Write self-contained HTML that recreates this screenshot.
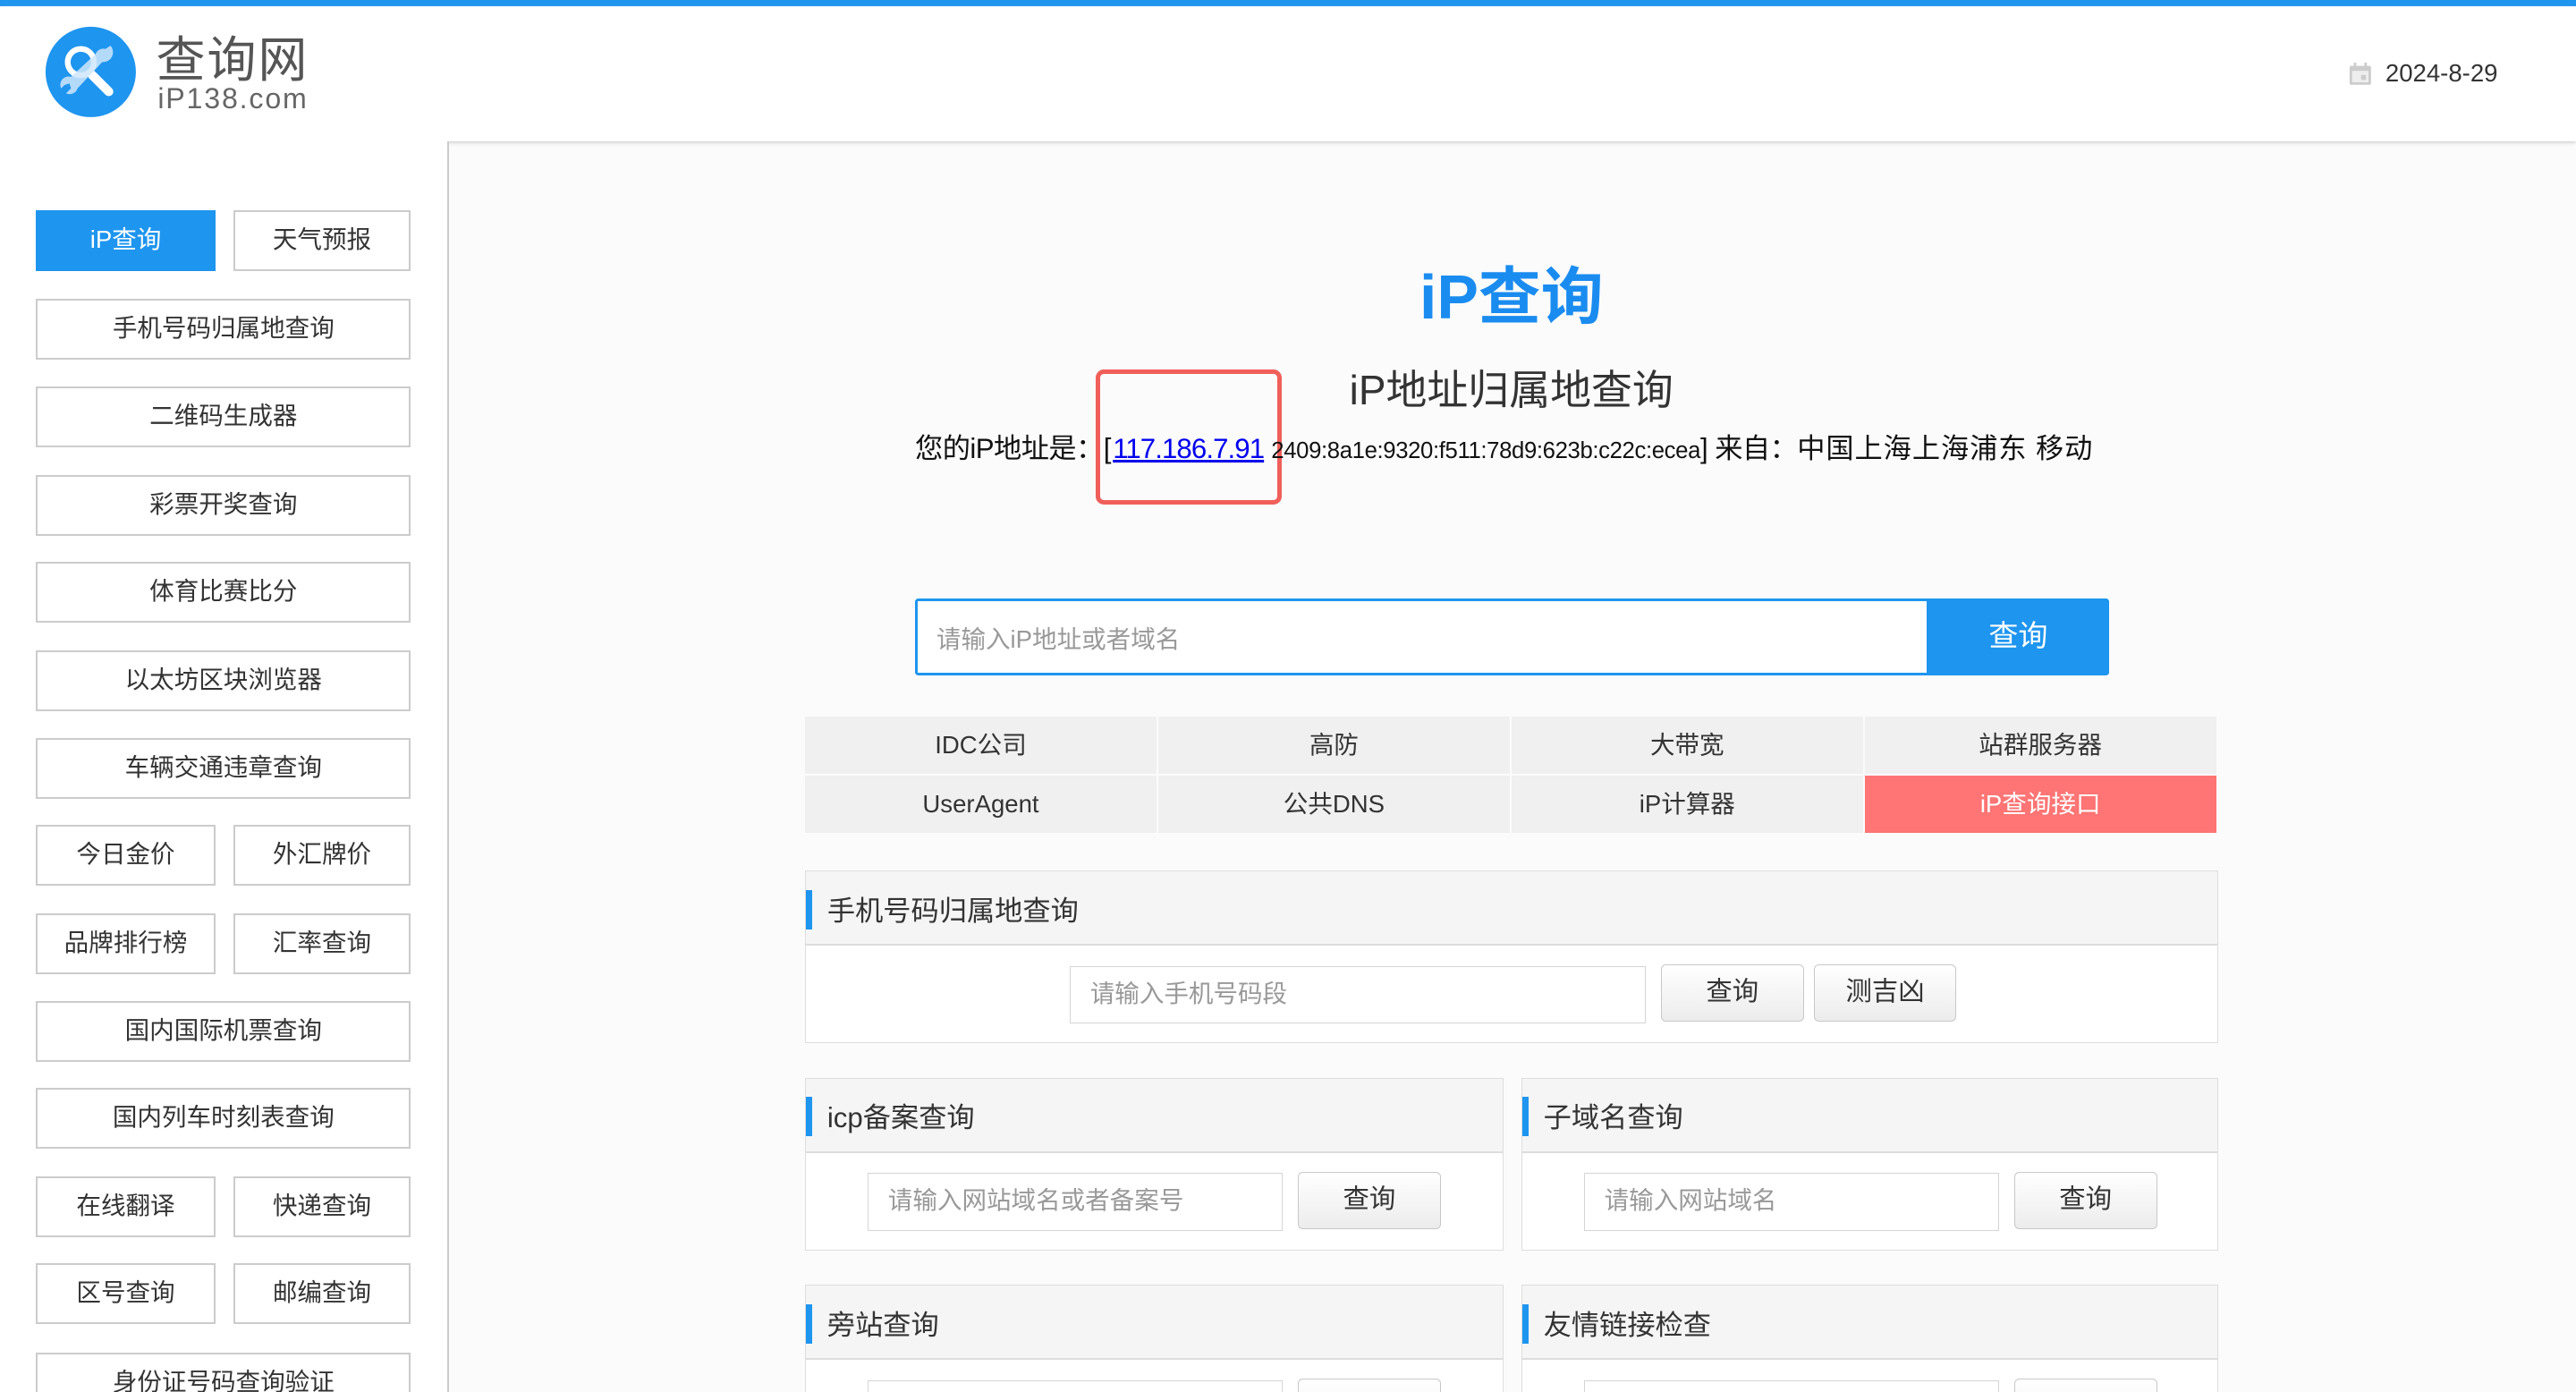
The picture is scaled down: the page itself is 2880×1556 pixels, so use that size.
<!DOCTYPE html>
<html><head><meta charset="utf-8">
<style>
html,body{margin:0;padding:0;width:2880px;height:1556px;overflow:hidden;background:#fbfbfb}
#w{position:absolute;left:0;top:0;width:1568px;height:847px;overflow:hidden;zoom:1.8367;font-family:"Liberation Sans","Noto Sans CJK SC",sans-serif;color:#333}
.a{position:absolute}
.topbar{left:0;top:0;width:1568px;height:4px;background:#1e95ef}
.hdr{left:0;top:4px;width:1568px;height:82px;background:#fff;box-shadow:0 1px 2px #ccc}
.side{left:0;top:86px;width:272px;height:761px;background:#fff;border-right:1.5px solid #ccc}
.b{position:absolute;box-sizing:border-box;height:37px;border:1.5px solid #ccc;background:#fff;text-align:center;line-height:34px;font-size:15px;color:#333}
.f{left:22px;width:228px}.l{left:22px;width:109px}.r{left:142px;width:108px}
.tab{position:absolute;width:214px;height:35px;background:#f0f0f0;text-align:center;line-height:35px;font-size:15px;color:#333}
.pn{position:absolute;box-sizing:border-box;border:1px solid #ddd;background:#fff}
.ph{height:44px;background:#f5f5f5;border-bottom:1.5px solid #ddd;position:relative}
.ph i{position:absolute;left:0;top:11px;width:4px;height:24px;background:#1e95ef}
.ph span{position:absolute;left:13px;top:10px;font-size:17px;color:#333}
.in{position:absolute;box-sizing:border-box;height:35px;border:1px solid #d5d5d5;background:#fff;font-size:15px;color:#999;line-height:33px;padding-left:12px}
.bt{position:absolute;box-sizing:border-box;height:35px;width:87px;border:1px solid #c8c8c8;border-radius:3px;background:linear-gradient(#fff,#ececec);text-align:center;line-height:33px;font-size:16px;color:#333}
</style></head><body><div id="w">
<div class="a topbar"></div>
<div class="a hdr"></div>
<svg class="a" style="left:27px;top:16px" width="56" height="56" viewBox="0 0 56 56">
<circle cx="28" cy="28" r="27.5" fill="#1e95ef"/>
<path d="M29 30 L39 40" stroke="#fff" stroke-width="5.5" stroke-linecap="round"/>
<circle cx="22" cy="22" r="8" fill="none" stroke="#fff" stroke-width="3.5"/>
<path d="M37 14 l3-2 a6 6 0 0 1 -5 10 L20 38 a5 5 0 0 1 -7 3 l3-3 -1-3 -3 1 -2 2 a5 5 0 0 1 6-7 L31 17 a5 5 0 0 1 6-3z" fill="#cfe6fb" opacity=".85"/>
</svg>
<div class="a" style="left:95px;top:12px;font-size:30px;color:#555;letter-spacing:1px">查询网</div>
<div class="a" style="left:96px;top:50px;font-size:17.5px;color:#666;letter-spacing:1px">iP138.com</div>
<svg class="a" style="left:1430px;top:38px" width="14" height="14" viewBox="0 0 14 14"><rect x="0.5" y="2" width="13" height="11.5" rx="1" fill="#ccc"/><rect x="2" y="5" width="10" height="7" fill="#eee"/><rect x="7.5" y="7.5" width="3" height="3" fill="#ccc"/><rect x="3" y="0" width="1.5" height="3" fill="#ccc"/><rect x="9.5" y="0" width="1.5" height="3" fill="#ccc"/></svg>
<div class="a" style="left:1452px;top:36px;font-size:15px;color:#333">2024-8-29</div>

<div class="a side"></div>
<div class="b l" style="top:128px;background:#1e95ef;border-color:#1e95ef;color:#fff">iP查询</div>
<div class="b r" style="top:128px">天气预报</div>
<div class="b f" style="top:182px">手机号码归属地查询</div>
<div class="b f" style="top:235px">二维码生成器</div>
<div class="b f" style="top:289px">彩票开奖查询</div>
<div class="b f" style="top:342px">体育比赛比分</div>
<div class="b f" style="top:396px">以太坊区块浏览器</div>
<div class="b f" style="top:449px">车辆交通违章查询</div>
<div class="b l" style="top:502px">今日金价</div><div class="b r" style="top:502px">外汇牌价</div>
<div class="b l" style="top:556px">品牌排行榜</div><div class="b r" style="top:556px">汇率查询</div>
<div class="b f" style="top:609px">国内国际机票查询</div>
<div class="b f" style="top:662px">国内列车时刻表查询</div>
<div class="b l" style="top:716px">在线翻译</div><div class="b r" style="top:716px">快递查询</div>
<div class="b l" style="top:769px">区号查询</div><div class="b r" style="top:769px">邮编查询</div>
<div class="b f" style="top:823px">身份证号码查询验证</div>

<div class="a" style="left:720px;width:400px;top:150px;text-align:center;font-size:38px;font-weight:bold;color:#1a8cf0">iP查询</div>
<div class="a" style="left:720px;width:400px;top:218px;text-align:center;font-size:25px;color:#333">iP地址归属地查询</div>
<div class="a" style="left:667px;top:225px;width:113px;height:82px;box-sizing:border-box;border:3px solid #f05f5a;border-radius:5px"></div>
<div class="a" style="left:557px;width:760px;top:259px;white-space:nowrap;font-size:17px;color:#111;letter-spacing:-.3px">您的iP地址是：<span style="letter-spacing:1px">[</span><span style="color:#00e;text-decoration:underline;font-size:17px;letter-spacing:-.5px">117.186.7.91</span> <span style="font-size:14px;letter-spacing:-.2px">2409:8a1e:9320:f511:78d9:623b:c22c:ecea</span>] 来自：<span style="letter-spacing:.5px">中国上海上海浦东 移动</span></div>

<div class="a" style="left:557px;top:364px;width:727px;height:47px;box-sizing:border-box;border:2px solid #1e95ef;background:#fff;border-radius:2px"></div>
<div class="a" style="left:570px;top:377px;font-size:15px;color:#999">请输入iP地址或者域名</div>
<div class="a" style="left:1173px;top:364px;width:111px;height:47px;background:#1e95ef;color:#fff;font-size:18px;text-align:center;line-height:47px;border-radius:0 2px 2px 0">查询</div>

<div class="tab" style="left:490px;top:436px">IDC公司</div>
<div class="tab" style="left:705px;top:436px">高防</div>
<div class="tab" style="left:920px;top:436px">大带宽</div>
<div class="tab" style="left:1135px;top:436px">站群服务器</div>
<div class="tab" style="left:490px;top:472px">UserAgent</div>
<div class="tab" style="left:705px;top:472px">公共DNS</div>
<div class="tab" style="left:920px;top:472px">iP计算器</div>
<div class="tab" style="left:1135px;top:472px;background:#ff7474;color:#fff">iP查询接口</div>

<div class="pn" style="left:490px;top:530px;width:860px;height:105px"><div class="ph"><i></i><span>手机号码归属地查询</span></div></div>
<div class="in" style="left:651px;top:588px;width:351px">请输入手机号码段</div>
<div class="bt" style="left:1011px;top:587px">查询</div>
<div class="bt" style="left:1104px;top:587px">测吉凶</div>

<div class="pn" style="left:490px;top:656px;width:425px;height:105px"><div class="ph"><i></i><span>icp备案查询</span></div></div>
<div class="in" style="left:528px;top:714px;width:253px">请输入网站域名或者备案号</div>
<div class="bt" style="left:790px;top:713px">查询</div>
<div class="pn" style="left:926px;top:656px;width:424px;height:105px"><div class="ph"><i></i><span>子域名查询</span></div></div>
<div class="in" style="left:964px;top:714px;width:253px">请输入网站域名</div>
<div class="bt" style="left:1226px;top:713px">查询</div>

<div class="pn" style="left:490px;top:782px;width:425px;height:105px"><div class="ph"><i></i><span>旁站查询</span></div></div>
<div class="in" style="left:528px;top:840px;width:253px"></div>
<div class="bt" style="left:790px;top:839px"></div>
<div class="pn" style="left:926px;top:782px;width:424px;height:105px"><div class="ph"><i></i><span>友情链接检查</span></div></div>
<div class="in" style="left:964px;top:840px;width:253px"></div>
<div class="bt" style="left:1226px;top:839px"></div>
</div></body></html>
